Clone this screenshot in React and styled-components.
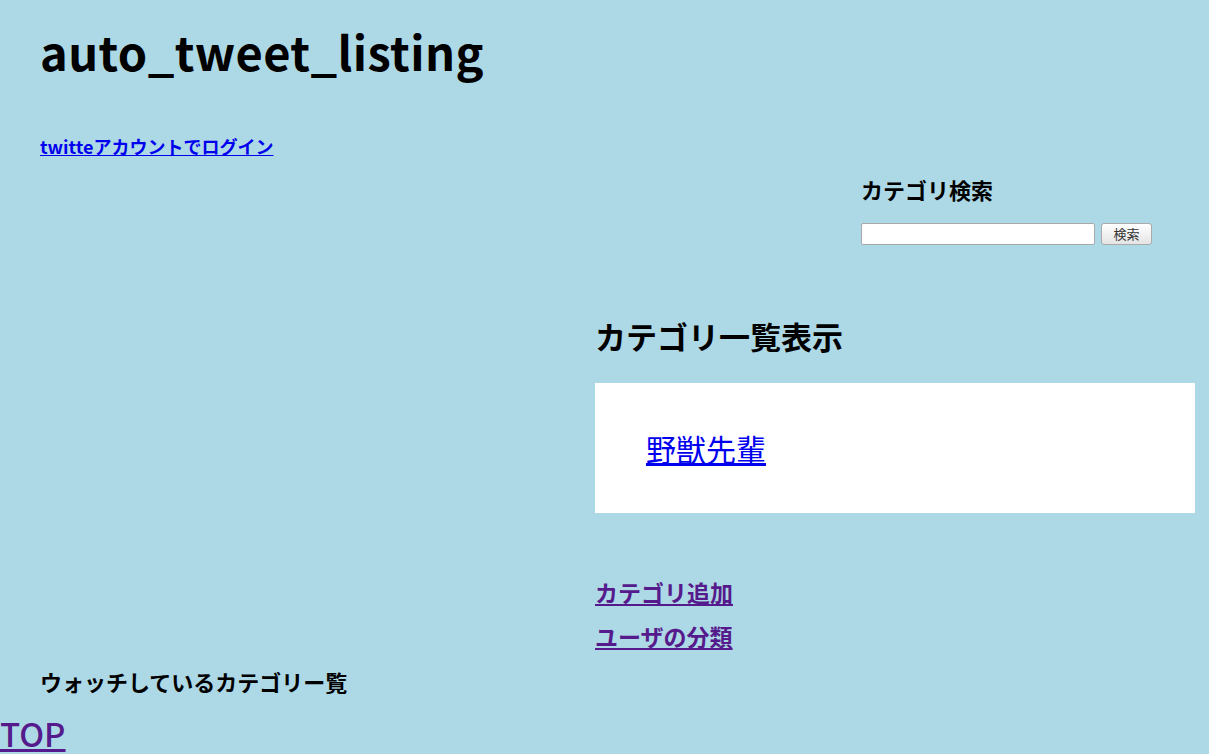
import React from 'react'
import styled, { createGlobalStyle } from 'styled-components'

const GlobalStyle = createGlobalStyle`
html, body {
    margin: 0;
    padding: 0;
    background: #add8e6;
}
body {
    font-family: "Noto Sans CJK JP", "Noto Sans", sans-serif;
    color: #000;
}
`;

const Page = styled.div`
display: flex;
flex-direction: column;
min-height: 754px;
`;

const Header = styled.header`
padding-left: 40px;
display: flex;
flex-direction: column;
align-items: flex-start;
`;

const Title = styled.h1`
margin: 23px 0 0 0;
font-size: 47px;
line-height: 56px;
font-weight: 700;
letter-spacing: 0.4px;
`;

const LoginLink = styled.a`
margin-top: 55px;
font-size: 18px;
line-height: 24px;
font-weight: 700;
color: #0000ee;
text-decoration: underline;
`;

const Side = styled.div`
align-self: flex-end;
width: 600px;
margin-right: 14px;
display: flex;
flex-direction: column;
align-items: flex-start;
`;

const Search = styled.div`
align-self: flex-end;
width: 334px;
margin-top: 17px;
`;

const SmallHeading = styled.h3`
margin: 0;
font-size: 22px;
line-height: 28px;
font-weight: 700;
`;

const SearchForm = styled.form`
margin-top: 20px;
display: flex;
gap: 6px;
`;

const TextInput = styled.input`
box-sizing: border-box;
width: 234px;
height: 22px;
border: 1px solid #a9a9a9;
border-radius: 2px;
background: #fff;
padding: 0 4px;
`;

const Button = styled.button`
box-sizing: border-box;
width: 51px;
height: 22px;
border: 1px solid #aaa;
border-radius: 3px;
background: linear-gradient(#fff, #e4e4e4);
font-family: "Noto Sans CJK JP", sans-serif;
font-size: 13px;
line-height: 18px;
color: #333;
padding: 0;
`;

const SectionTitle = styled.h2`
margin: 71px 0 0 0;
font-size: 31px;
line-height: 40px;
font-weight: 700;
`;

const ListBox = styled.div`
box-sizing: border-box;
margin-top: 27px;
width: 600px;
height: 130px;
background: #fff;
display: flex;
align-items: center;
padding: 0 0 0 51px;
`;

const CategoryLink = styled.a`
font-size: 30px;
line-height: 36px;
color: #0000ee;
text-decoration: underline;
`;

const Links = styled.nav`
margin-top: 64px;
display: flex;
flex-direction: column;
gap: 14px;
align-items: flex-start;
`;

const VisitedLink = styled.a`
font-size: ${p => p.$size || 23}px;
line-height: ${p => p.$lh || 30}px;
font-weight: ${p => p.$weight || 700};
color: #551a8b;
text-decoration: underline;
`;

const Watch = styled.h3`
margin: 16px 0 0 40px;
font-size: 22px;
line-height: 28px;
font-weight: 700;
`;

const Footer = styled.div`
margin-top: 20px;
`;

export default function App() {
    return (
        <>
            <GlobalStyle />
            <Page>
                <Header>
                    <Title>auto_tweet_listing</Title>
                    <LoginLink href="#">twitteアカウントでログイン</LoginLink>
                </Header>

                <Side>
                    <Search>
                        <SmallHeading>カテゴリ検索</SmallHeading>
                        <SearchForm onSubmit={e => e.preventDefault()}>
                            <TextInput type="text" />
                            <Button type="submit">検索</Button>
                        </SearchForm>
                    </Search>

                    <SectionTitle>カテゴリ一覧表示</SectionTitle>
                    <ListBox>
                        <CategoryLink href="#">野獣先輩</CategoryLink>
                    </ListBox>

                    <Links>
                        <VisitedLink href="#">カテゴリ追加</VisitedLink>
                        <VisitedLink href="#">ユーザの分類</VisitedLink>
                    </Links>
                </Side>

                <Watch>ウォッチしているカテゴリー覧</Watch>

                <Footer>
                    <VisitedLink href="#" $size={33} $lh={36} $weight={500}>TOP</VisitedLink>
                </Footer>
            </Page>
        </>
    )
}
